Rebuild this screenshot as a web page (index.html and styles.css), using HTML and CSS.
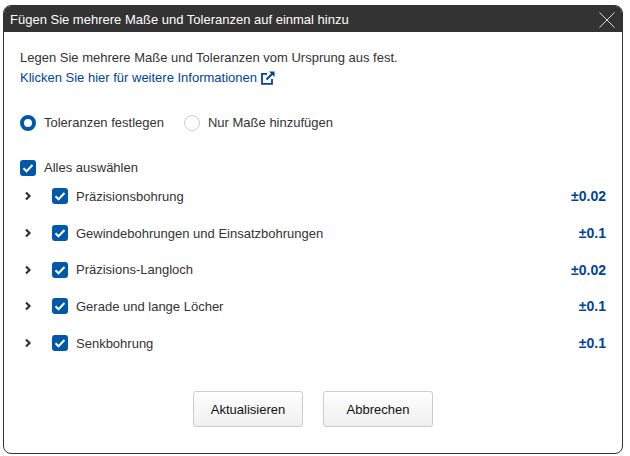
FILE: index.html
```html
<!DOCTYPE html>
<html lang="de">
<head>
<meta charset="utf-8">
<title>Maße und Toleranzen</title>
<link rel="stylesheet" href="styles.css">
</head>
<body>
<div class="dialog">
  <header class="head">
    <span class="title">Fügen Sie mehrere Maße und Toleranzen auf einmal hinzu</span>
    <svg class="close" width="16" height="16" viewBox="0 0 16 16"><path d="M.5.5l15 15M15.500.5l-15 15" stroke="#d8d8d8" stroke-width="1" fill="none"/></svg>
  </header>
  <div class="content">
    <p class="intro">Legen Sie mehrere Maße und Toleranzen vom Ursprung aus fest.</p>
    <a class="link">Klicken Sie hier für weitere Informationen
      <svg width="14" height="14" viewBox="0 0 14 14"><path d="M11 8v4.800h-10v-10h5" fill="none" stroke="#00439c" stroke-width="1.800"/><path d="M5.500 8.500l6-6" stroke="#00439c" stroke-width="2"/><path d="M8 .5h5.500v5.500z" fill="#00439c"/></svg>
    </a>
    <div class="radios">
      <label class="radio"><span class="dot on"></span>Toleranzen festlegen</label>
      <label class="radio"><span class="dot"></span>Nur Maße hinzufügen</label>
    </div>
    <label class="all"><span class="box"><svg width="16" height="16" viewBox="0 0 16 16"><path d="M3.500 8.200l3 3 6-6.200" fill="none" stroke="#fff" stroke-width="2"/></svg></span>Alles auswählen</label>
    <ul class="rows">
      <li class="row"><svg class="chev" width="8" height="10" viewBox="0 0 8 10"><path d="M2 1.500l3.500 3.500-3.500 3.500" fill="none" stroke="#333" stroke-width="2.200"/></svg><span class="box"><svg width="16" height="16" viewBox="0 0 16 16"><path d="M3.500 8.200l3 3 6-6.200" fill="none" stroke="#fff" stroke-width="2"/></svg></span><span class="name">Präzisionsbohrung</span><b class="tol">±0.02</b></li>
      <li class="row"><svg class="chev" width="8" height="10" viewBox="0 0 8 10"><path d="M2 1.500l3.500 3.500-3.500 3.500" fill="none" stroke="#333" stroke-width="2.200"/></svg><span class="box"><svg width="16" height="16" viewBox="0 0 16 16"><path d="M3.500 8.200l3 3 6-6.200" fill="none" stroke="#fff" stroke-width="2"/></svg></span><span class="name">Gewindebohrungen und Einsatzbohrungen</span><b class="tol">±0.1</b></li>
      <li class="row"><svg class="chev" width="8" height="10" viewBox="0 0 8 10"><path d="M2 1.500l3.500 3.500-3.500 3.500" fill="none" stroke="#333" stroke-width="2.200"/></svg><span class="box"><svg width="16" height="16" viewBox="0 0 16 16"><path d="M3.500 8.200l3 3 6-6.200" fill="none" stroke="#fff" stroke-width="2"/></svg></span><span class="name">Präzisions-Langloch</span><b class="tol">±0.02</b></li>
      <li class="row"><svg class="chev" width="8" height="10" viewBox="0 0 8 10"><path d="M2 1.500l3.500 3.500-3.500 3.500" fill="none" stroke="#333" stroke-width="2.200"/></svg><span class="box"><svg width="16" height="16" viewBox="0 0 16 16"><path d="M3.500 8.200l3 3 6-6.200" fill="none" stroke="#fff" stroke-width="2"/></svg></span><span class="name">Gerade und lange Löcher</span><b class="tol">±0.1</b></li>
      <li class="row"><svg class="chev" width="8" height="10" viewBox="0 0 8 10"><path d="M2 1.500l3.500 3.500-3.500 3.500" fill="none" stroke="#333" stroke-width="2.200"/></svg><span class="box"><svg width="16" height="16" viewBox="0 0 16 16"><path d="M3.500 8.200l3 3 6-6.200" fill="none" stroke="#fff" stroke-width="2"/></svg></span><span class="name">Senkbohrung</span><b class="tol">±0.1</b></li>
    </ul>
    <div class="actions">
      <button class="btn">Aktualisieren</button>
      <button class="btn">Abbrechen</button>
    </div>
  </div>
</div>
</body>
</html>
```
FILE: styles.css
```css
* { box-sizing: border-box; }
html, body { margin: 0; background: #fff; }
body { padding: 5px 7px 2px 3px; font: 13px "Liberation Sans", Arial, sans-serif; color: #333; height: 456px; overflow: hidden; }
.dialog { height: 449px; border: 1px solid #333; border-radius: 8px; display: flex; flex-direction: column; overflow: hidden; background: #fff; }
.head { height: 26px; flex: none; background: #333; color: #fff; display: flex; align-items: center; justify-content: space-between; padding: 0 7px 0 6px; }
.title { font-size: 13px; }
.close { display: block; margin-top: 1px; }
.content { flex: 1; padding: 18px 16px 0 16px; display: flex; flex-direction: column; }
.intro { margin: 0; line-height: 16px; }
.link { margin-top: 4px; line-height: 16px; color: #00439c; display: flex; align-items: center; gap: 4px; }
.radios { display: flex; gap: 20px; margin-top: 29px; }
.radio { display: flex; align-items: center; gap: 8px; line-height: 16px; }
.dot { width: 16px; height: 16px; border-radius: 50%; border: 1px solid #ccc; background: #fff; }
.dot.on { border: 4px solid #0059a8; }
.all { display: flex; align-items: center; gap: 8px; margin-top: 29px; line-height: 16px; }
.box { width: 16px; height: 16px; border-radius: 3px; background: #0059a8; flex: none; display: block; }
.box svg { display: block; }
.rows { list-style: none; margin: 2px 0 0; padding: 0; }
.row { height: 36.7px; display: flex; align-items: center; }
.chev { margin: 0 0 0 4px; flex: none; }
.box + .name { margin-left: 8px; }
.row .box { margin-left: 20px; }
.name { flex: 1; }
.tol { color: #00439c; font-size: 14px; }
.actions { display: flex; justify-content: center; gap: 20px; margin-top: 30px; }
.btn { width: 110px; height: 36px; font: 13px "Liberation Sans", Arial, sans-serif; color: #111; background: linear-gradient(#fff, #efefef); border: 1px solid #ccc; border-radius: 3px; padding: 0; }
```
